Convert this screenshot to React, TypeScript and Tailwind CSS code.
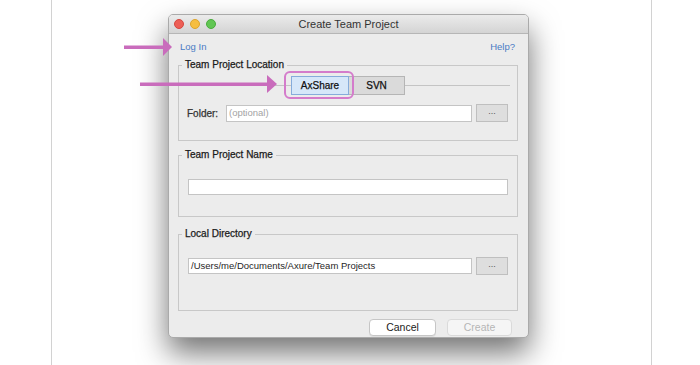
import React from 'react';

const font = "font-['Liberation_Sans',Arial,sans-serif]";
const heavy = '[-webkit-text-stroke:0.25px_currentColor]';

function Dots() {
  return (
    <button className="w-[32px] h-[18px] bg-[#dedede] border border-[#bfbfbf] flex items-center justify-center text-[9px] leading-none text-[#555] pb-[3px]">
      ...
    </button>
  );
}

export default function App() {
  return (
    <div className={`relative w-[700px] h-[365px] bg-white overflow-hidden ${font}`}>
      <div className="ml-[51px] w-[601px] h-full border-x border-[#d2d2d2] pt-[14px]">
        {/* dialog window */}
        <div className="ml-[116px] w-[361px] h-[324px] rounded-[5px] border border-[#aaaaaa] bg-[#ececec] shadow-[0_15px_30px_rgba(0,0,0,0.55)] flex flex-col overflow-hidden">
          {/* title bar */}
          <div className="h-[19px] shrink-0 grid grid-cols-[1fr_auto_1fr] items-center bg-gradient-to-b from-[#ebebeb] to-[#d4d4d4] border-b border-[#b6b6b6]">
            <div className="flex items-center gap-[6px] pl-[5px]">
              <span className="w-[10px] h-[10px] rounded-full bg-[#ed5f56] border border-[#d4473f]" />
              <span className="w-[10px] h-[10px] rounded-full bg-[#f6be40] border border-[#dca42c]" />
              <span className="w-[10px] h-[10px] rounded-full bg-[#61c653] border border-[#4aab3d]" />
            </div>
            <div className="text-[11px] text-[#333] leading-none">Create Team Project</div>
            <div />
          </div>

          {/* links */}
          <div className="mt-[7px] h-[12px] flex items-center justify-between pl-[11px] pr-[13px] text-[9.5px] text-[#4a7bc4] leading-none">
            <span>Log In</span>
            <span>Help?</span>
          </div>

          {/* Team Project Location */}
          <fieldset className="mt-[6px] ml-[9px] mr-[10px] border border-[#c8c8c8]">
            <legend className={`ml-[3px] px-[3px] text-[10px] leading-[12px] text-[#1a1a1a] ${heavy}`}>Team Project Location</legend>
            <div className="h-[28px] flex items-center px-[7px]">
              <div className="flex-1 h-px bg-[#c4c4c4]" />
              <div className="relative">
                <div className="absolute -left-[7px] -right-[5px] -top-[5px] -bottom-[4px] rounded-[6px] border-2 border-[#d47ccb]" />
                <div className={`w-[58px] h-[19px] bg-[#d6e7f9] border border-[#86acdb] flex items-center justify-center text-[10px] text-[#111] ${heavy}`}>AxShare</div>
              </div>
              <div className={`w-[56px] h-[19px] bg-[#dadada] border border-[#b5b5b5] border-l-0 flex items-center justify-center text-[10px] text-[#111] ${heavy}`}>SVN</div>
              <div className="flex-1 h-px bg-[#c4c4c4]" />
            </div>
            <div className="mt-[5px] mb-[18px] h-[18px] flex items-center pl-[8px] pr-[9px]">
              <span className={`text-[10px] text-[#333] w-[39px] ${heavy}`}>Folder:</span>
              <div className="flex-1 h-[17px] bg-white border border-[#c4c4c4] flex items-center px-[2px] text-[9.5px] text-[#a3a3a3]">(optional)</div>
              <div className="ml-[4px]"><Dots /></div>
            </div>
          </fieldset>

          {/* Team Project Name */}
          <fieldset className="mt-[8px] ml-[9px] mr-[10px] border border-[#c8c8c8]">
            <legend className={`ml-[3px] px-[3px] text-[10px] leading-[12px] text-[#1a1a1a] ${heavy}`}>Team Project Name</legend>
            <div className="mt-[18px] mb-[21px] px-[9px]">
              <div className="h-[16px] bg-white border border-[#c4c4c4]" />
            </div>
          </fieldset>

          {/* Local Directory */}
          <fieldset className="mt-[11px] ml-[9px] mr-[10px] border border-[#c8c8c8]">
            <legend className={`ml-[3px] px-[3px] text-[10px] leading-[12px] text-[#1a1a1a] ${heavy}`}>Local Directory</legend>
            <div className="mt-[17px] mb-[35px] h-[18px] flex items-center pl-[9px] pr-[9px]">
              <div className="flex-1 h-[16px] bg-white border border-[#c4c4c4] flex items-center px-[2px] text-[9.5px] text-[#1f1f1f]">/Users/me/Documents/Axure/Team Projects</div>
              <div className="ml-[4px]"><Dots /></div>
            </div>
          </fieldset>

          {/* buttons */}
          <div className="mt-[8px] flex justify-end gap-[11px] pr-[16px]">
            <button className="w-[67px] h-[17px] rounded-[4px] bg-white border border-[#c6c6c6] shadow-[0_1px_0_rgba(0,0,0,0.06)] text-[10.5px] text-[#1a1a1a] leading-none">Cancel</button>
            <button className="w-[65px] h-[17px] rounded-[4px] bg-[#f5f5f5] border border-[#dadada] text-[10.5px] text-[#b5b5b5] leading-none">Create</button>
          </div>
        </div>
      </div>

      {/* annotation arrows */}
      <svg className="absolute left-0 top-0 pointer-events-none" width="700" height="365" viewBox="0 0 700 365">
        <rect x="124" y="45.5" width="40" height="3.5" fill="#c96cbc" />
        <polygon points="163,38 172,47 163,56" fill="#c96cbc" />
        <rect x="140" y="82.5" width="128" height="3.5" fill="#c96cbc" />
        <polygon points="267,75 277,84 267,93" fill="#c96cbc" />
      </svg>
    </div>
  );
}
